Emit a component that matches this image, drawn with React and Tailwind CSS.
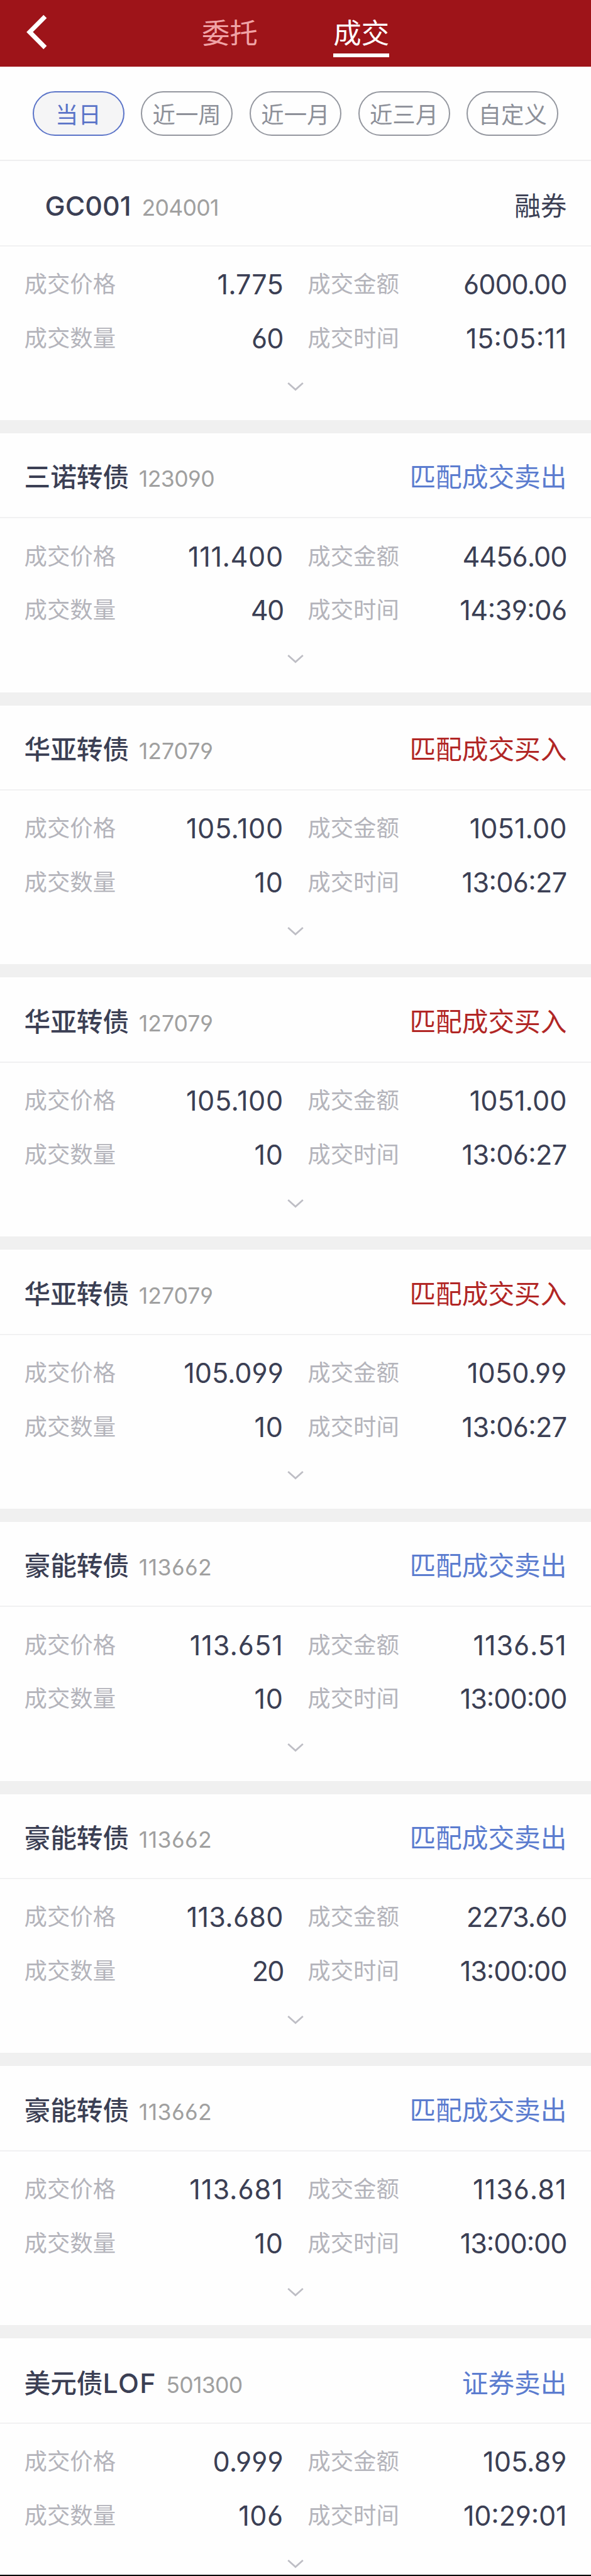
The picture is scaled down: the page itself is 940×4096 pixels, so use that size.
import { useLayoutEffect, useRef } from "react";

const TRADES = [
  { name: "", latin: "GC001", code: "204001", side: "融券", tone: "plain", price: "1.775", amount: "6000.00", qty: "60", time: "15:05:11", indent: true },
  { name: "三诺转债", code: "123090", side: "匹配成交卖出", tone: "sell", price: "111.400", amount: "4456.00", qty: "40", time: "14:39:06" },
  { name: "华亚转债", code: "127079", side: "匹配成交买入", tone: "buy", price: "105.100", amount: "1051.00", qty: "10", time: "13:06:27" },
  { name: "华亚转债", code: "127079", side: "匹配成交买入", tone: "buy", price: "105.100", amount: "1051.00", qty: "10", time: "13:06:27" },
  { name: "华亚转债", code: "127079", side: "匹配成交买入", tone: "buy", price: "105.099", amount: "1050.99", qty: "10", time: "13:06:27" },
  { name: "豪能转债", code: "113662", side: "匹配成交卖出", tone: "sell", price: "113.651", amount: "1136.51", qty: "10", time: "13:00:00" },
  { name: "豪能转债", code: "113662", side: "匹配成交卖出", tone: "sell", price: "113.680", amount: "2273.60", qty: "20", time: "13:00:00" },
  { name: "豪能转债", code: "113662", side: "匹配成交卖出", tone: "sell", price: "113.681", amount: "1136.81", qty: "10", time: "13:00:00" },
  { name: "美元债", latin: "LOF", code: "501300", side: "证券卖出", tone: "sell", price: "0.999", amount: "105.89", qty: "106", time: "10:29:01" },
];

const TONES = {
  plain: "text-[#3b3f54]",
  sell: "text-[#5b7ccf]",
  buy: "text-[#b12625]",
};

const RANGES = ["当日", "近一周", "近一月", "近三月", "自定义"];

// Advance of each figure, in em.
const ADVANCE = {
  0: 0.59, 1: 0.482, 2: 0.566, 3: 0.57, 4: 0.614, 5: 0.58,
  6: 0.586, 7: 0.552, 8: 0.586, 9: 0.58, ".": 0.27, ":": 0.26,
};

// A number whose tracking is adjusted so that it takes the width given by ADVANCE.
function Figures({ text, className }) {
  const ref = useRef(null);
  useLayoutEffect(() => {
    const el = ref.current;
    el.style.letterSpacing = "0px";
    const size = parseFloat(getComputedStyle(el).fontSize);
    const target = [...text].reduce((sum, ch) => sum + ADVANCE[ch], 0) * size;
    const natural = el.getBoundingClientRect().width;
    el.style.letterSpacing = (target - natural) / text.length + "px";
  }, [text]);
  return (
    <span ref={ref} className={"whitespace-nowrap " + className}>
      {text}
    </span>
  );
}

function Header() {
  return (
    <header className="flex h-[106px] shrink-0 bg-[#9e1419]">
      <div className="w-[321px] pl-[36px] pt-[20px]">
        <svg width="44" height="62" viewBox="0 0 44 62" fill="none">
          <path d="M35.8 6.2 L11.2 30.9 L35.8 55.6" stroke="#fff" strokeWidth="7.2" />
        </svg>
      </div>
      <nav className="flex gap-[120.5px] pt-[21px] text-[44.4px] leading-[64px]">
        <span className="h-[70px] text-[#f0a3a6]">委托</span>
        <span className="h-[70px] border-b-[6px] border-white text-white">成交</span>
      </nav>
    </header>
  );
}

function Filters() {
  return (
    <div className="flex h-[150px] shrink-0 gap-[26.7px] border-b-2 border-[#efeff0] pl-[51.5px] pt-[39px]">
      {RANGES.map((label, i) => (
        <button
          key={label}
          className={
            "flex h-[71px] w-[146px] items-center justify-center rounded-full border-2 pt-[4px] text-[36.4px] leading-[50px] " +
            (i === 0 ? "border-[#5b74c8] bg-[#f5f5f6] text-[#5b74c8]" : "border-[#94979f] text-[#8d9099]")
          }
        >
          {label}
        </button>
      ))}
    </div>
  );
}

function Field({ label, value }) {
  return (
    <div className="flex h-[85.6px] items-center justify-between">
      <span className="text-[36.4px] leading-[60px] text-[#b4b4bb]">{label}</span>
      <Figures text={value} className="text-[43.2px] leading-[60px] text-[#3b3f54]" />
    </div>
  );
}

function Trade({ t }) {
  return (
    <section className="h-[432.75px] shrink-0 border-b-[21px] border-[#f0f0f0]">
      <div className="flex h-[135.7px] items-baseline justify-between border-b-2 border-[#f1f1f2] px-[38.5px] pt-[38.5px]">
        <div className={"flex items-baseline leading-[64px] " + (t.indent ? "gap-[17px] pl-[33px]" : "gap-[15.5px]")}>
          <span className="text-[41.7px] font-medium text-[#3b3f54]">
            {t.name}
            {t.latin && (
              <span className={"text-[43px] " + (t.indent ? "" : "tracking-[0.03em]")}>{t.latin}</span>
            )}
          </span>
          <Figures text={t.code} className="text-[35.6px] text-[#a0a0a0]" />
        </div>
        <span className={"text-[41.7px] leading-[64px] " + TONES[t.tone]}>{t.side}</span>
      </div>
      <div className="grid grid-cols-2 gap-x-[38.5px] px-[38.5px] pt-[17.5px]">
        <Field label="成交价格" value={t.price} />
        <Field label="成交金额" value={t.amount} />
        <Field label="成交数量" value={t.qty} />
        <Field label="成交时间" value={t.time} />
      </div>
      <div className="flex justify-center pt-[27px]">
        <svg width="28" height="16" viewBox="0 0 28 16" fill="none">
          <path d="M2.2 2 L14 12.6 L25.8 2" stroke="#bebec5" strokeWidth="2.7" />
        </svg>
      </div>
    </section>
  );
}

export default function App() {
  return (
    <div className="flex h-[4096px] w-[940px] flex-col overflow-hidden border-b-2 border-black bg-[#fefefe] font-['Inter','Noto_Sans_CJK_SC',sans-serif] [font-feature-settings:'cv03','cv04','calt']">
      <Header />
      <Filters />
      {TRADES.map((t, i) => (
        <Trade key={i} t={t} />
      ))}
    </div>
  );
}
